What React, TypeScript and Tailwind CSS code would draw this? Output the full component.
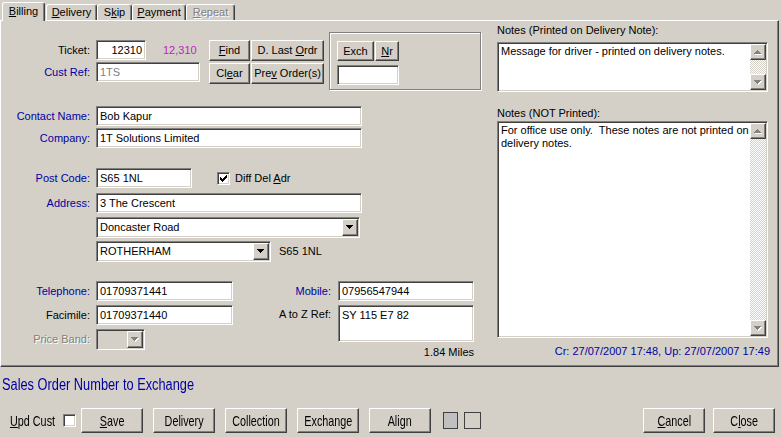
import type { ReactNode } from "react";

const sunken =
  "border border-t-[#808080] border-l-[#808080] border-b-white border-r-white shadow-[inset_1px_1px_0_#404040,inset_-1px_-1px_0_#d4d0c8]";
const raised =
  "border border-t-white border-l-white border-b-[#404040] border-r-[#404040] shadow-[inset_-1px_-1px_0_#808080]";
const blue = "text-[#0000a0]";
const disabledText = "text-[#808080] [text-shadow:1px_1px_0_#fff]";

function Label({ children, className = "" }: { children: ReactNode; className?: string }) {
  return (
    <div className={`w-[89px] mr-[6px] shrink-0 text-right whitespace-nowrap ${className}`}>{children}</div>
  );
}

function Field({ children, className = "" }: { children?: ReactNode; className?: string }) {
  return (
    <div
      className={`${sunken} bg-white h-[20px] shrink-0 flex items-center px-[3px] whitespace-nowrap overflow-hidden ${className}`}
    >
      {children}
    </div>
  );
}

function Btn({ children, className = "" }: { children?: ReactNode; className?: string }) {
  return (
    <div
      className={`${raised} bg-[#d4d0c8] shrink-0 flex items-center justify-center whitespace-nowrap ${className}`}
    >
      {children}
    </div>
  );
}

// windows style 7x4 pixel arrow
function Arrow({ up = false, gray = false }: { up?: boolean; gray?: boolean }) {
  const d = "M0 0H7V1H6V2H5V3H4V4H3V3H2V2H1V1H0Z";
  return (
    <svg
      width="8"
      height="5"
      viewBox="0 0 8 5"
      shapeRendering="crispEdges"
      className={up ? "rotate-180" : ""}
    >
      {gray && <path d={d} fill="#fff" transform={up ? "translate(0 0)" : "translate(1 1)"} />}
      <path d={d} fill={gray ? "#808080" : "#000"} transform={up ? "translate(1 1)" : ""} />
    </svg>
  );
}

function Combo({
  children,
  className = "",
  disabled = false,
}: {
  children?: ReactNode;
  className?: string;
  disabled?: boolean;
}) {
  return (
    <div
      className={`${sunken} ${disabled ? "bg-[#d4d0c8]" : "bg-white"} h-[21px] shrink-0 flex items-center pl-[3px] pr-[1px]`}
    >
      <div className={`flex-1 whitespace-nowrap overflow-hidden ${className}`}>{children}</div>
      <Btn className="w-[16px] h-[17px]">
        <Arrow gray={disabled} />
      </Btn>
    </div>
  );
}

function ScrollBar() {
  return (
    <div className="w-[16px] flex flex-col shrink-0">
      <Btn className="w-[16px] h-[16px]">
        <Arrow up gray />
      </Btn>
      <div className="flex-1 bg-[repeating-conic-gradient(#fff_0_25%,#d4d0c8_0_50%)] bg-[length:2px_2px]" />
      <Btn className="w-[16px] h-[16px]">
        <Arrow gray />
      </Btn>
    </div>
  );
}

function Memo({ children, className = "" }: { children?: ReactNode; className?: string }) {
  return (
    <div className={`${sunken} bg-white p-[1px] flex w-[271px] ${className}`}>
      <div className="flex-1 pl-[2px] pt-[1px] whitespace-pre">{children}</div>
      <ScrollBar />
    </div>
  );
}

function CheckBox({ checked = false }: { checked?: boolean }) {
  return (
    <div className={`${sunken} bg-white w-[13px] h-[13px] shrink-0 flex items-center justify-center`}>
      {checked && (
        <svg width="7" height="7" viewBox="0 0 7 7" shapeRendering="crispEdges">
          <path d="M0 2H1V3H2V4H3V3H4V2H5V1H6V0H7V3H6V4H5V5H4V6H3V7H2V6H1V5H0Z" fill="#000" />
        </svg>
      )}
    </div>
  );
}

function Tab({
  children,
  active = false,
  className = "",
}: {
  children: ReactNode;
  active?: boolean;
  className?: string;
}) {
  return (
    <div
      className={`${
        active ? "h-[19px] -mb-[1px] relative z-10 pb-[2px]" : "h-[16px]"
      } bg-[#d4d0c8] border-t border-l border-r border-t-white border-l-white border-r-[#404040] shadow-[inset_-1px_0_0_#808080] rounded-t-[3px] flex items-center justify-center shrink-0 ${className}`}
    >
      {children}
    </div>
  );
}

// condensed text for the bottom bar (no narrow face installed)
function Narrow({ children, className = "" }: { children: ReactNode; className?: string }) {
  return <span className={`inline-block whitespace-nowrap scale-x-[0.72] ${className}`}>{children}</span>;
}

function BottomBtn({ children }: { children: ReactNode }) {
  return (
    <Btn className="w-[62px] h-[25px]">
      <Narrow>{children}</Narrow>
    </Btn>
  );
}

export default function App() {
  return (
    <div className="w-[781px] h-[437px] bg-[#d4d0c8] overflow-hidden text-[11px] leading-[13px] text-black font-['Liberation_Sans',Arial,sans-serif] select-none">
      {/* tabs */}
      <div className="flex items-end h-[20px] pl-[2px]">
        <Tab active className="w-[43px]">
          <span>
            <u>B</u>illing
          </span>
        </Tab>
        <Tab className="w-[51px] ml-[1px]">
          <span>
            <u>D</u>elivery
          </span>
        </Tab>
        <Tab className="w-[35px]">
          <span>
            S<u>k</u>ip
          </span>
        </Tab>
        <Tab className="w-[54px]">
          <span>
            <u>P</u>ayment
          </span>
        </Tab>
        <Tab className="w-[49px]">
          <span className={disabledText}>
            <u>R</u>epeat
          </span>
        </Tab>
      </div>

      {/* tab page */}
      <div className="w-[779px] h-[347px] border border-t-white border-l-white border-b-[#404040] border-r-[#404040] shadow-[inset_-1px_-1px_0_#808080] flex">
        {/* left column */}
        <div className="w-[480px] shrink-0 pt-[11px]">
          <div className="flex items-start h-[58px]">
            <div className="w-[208px] shrink-0 pt-[8px]">
              <div className="flex items-center">
                <Label>Ticket:</Label>
                <Field className="w-[50px] justify-end">12310</Field>
                <span className="ml-[17px] text-[#c020c0]">12,310</span>
              </div>
              <div className="flex items-center mt-[2px]">
                <Label className={blue}>Cust Ref:</Label>
                <Field className="w-[104px] text-[#808080]">1TS</Field>
              </div>
            </div>
            <div className="w-[116px] shrink-0 pt-[8px]">
              <div className="flex">
                <Btn className="w-[41px] h-[21px]">
                  <span>
                    <u>F</u>ind
                  </span>
                </Btn>
                <Btn className="w-[73px] h-[21px] ml-[1px]">
                  <span>
                    D. Last <u>O</u>rdr
                  </span>
                </Btn>
              </div>
              <div className="flex mt-[2px]">
                <Btn className="w-[41px] h-[21px]">
                  <span>
                    Cl<u>e</u>ar
                  </span>
                </Btn>
                <Btn className="w-[73px] h-[21px] ml-[1px]">
                  <span>
                    Pre<u>v</u> Order(s)
                  </span>
                </Btn>
              </div>
            </div>
            <div className="ml-[4px] w-[152px] h-[58px] border border-[#808080] shadow-[1px_1px_0_#fff,inset_1px_1px_0_#fff] pl-[7px] pt-[8px]">
              <div className="flex">
                <Btn className="w-[37px] h-[20px]">Exch</Btn>
                <Btn className="w-[24px] h-[20px] ml-[1px]">
                  <u>N</u>r
                </Btn>
              </div>
              <Field className="w-[62px] h-[19px] mt-[4px]" />
            </div>
          </div>

          <div className="flex items-center mt-[16px]">
            <Label className={blue}>Contact Name:</Label>
            <Field className="w-[266px]">Bob Kapur</Field>
          </div>
          <div className="flex items-center mt-[2px]">
            <Label className={blue}>Company:</Label>
            <Field className="w-[266px]">1T Solutions Limited</Field>
          </div>

          <div className="flex items-center mt-[20px]">
            <Label className={blue}>Post Code:</Label>
            <Field className="w-[96px]">S65 1NL</Field>
            <div className="ml-[25px]">
              <CheckBox checked />
            </div>
            <span className="ml-[5px]">
              Diff Del <u>A</u>dr
            </span>
          </div>
          <div className="flex items-center mt-[5px]">
            <Label className={blue}>Address:</Label>
            <Field className="w-[266px]">3 The Crescent</Field>
          </div>
          <div className="flex items-center mt-[4px] pl-[95px]">
            <div className="w-[264px]">
              <Combo>Doncaster Road</Combo>
            </div>
          </div>
          <div className="flex items-center mt-[3px] pl-[95px]">
            <div className="w-[175px]">
              <Combo>ROTHERHAM</Combo>
            </div>
            <span className="ml-[8px]">S65 1NL</span>
          </div>

          <div className="flex mt-[19px]">
            <div className="w-[249px] shrink-0">
              <div className="flex items-center">
                <Label className={blue}>Telephone:</Label>
                <Field className="w-[137px]">01709371441</Field>
              </div>
              <div className="flex items-center mt-[4px]">
                <Label>Facimile:</Label>
                <Field className="w-[137px]">01709371440</Field>
              </div>
              <div className="flex items-center mt-[4px]">
                <Label className={disabledText}>Price Band:</Label>
                <div className="w-[49px]">
                  <Combo disabled />
                </div>
              </div>
            </div>
            <div className="w-[224px] shrink-0">
              <div className="flex items-center">
                <div className={`w-[81px] mr-[7px] text-right ${blue}`}>Mobile:</div>
                <Field className="w-[136px]">07956547944</Field>
              </div>
              <div className="flex items-start mt-[4px]">
                <div className="w-[81px] mr-[7px] text-right pt-[3px]">A to Z Ref:</div>
                <div className={`${sunken} bg-white w-[136px] h-[37px] px-[3px] pt-[3px]`}>SY 115 E7 82</div>
              </div>
              <div className="text-right mt-[4px]">1.84 Miles</div>
            </div>
          </div>
        </div>

        {/* right column */}
        <div className="ml-[16px] w-[273px] shrink-0 pt-[3px]">
          <div>Notes (Printed on Delivery Note):</div>
          <Memo className="h-[50px] mt-[5px]">Message for driver - printed on delivery notes.</Memo>
          <div className="mt-[15px]">Notes (NOT Printed):</div>
          <Memo className="h-[217px] mt-[1px]">
            {"For office use only.  These notes are not printed on\ndelivery notes."}
          </Memo>
          <div className={`text-right mt-[7px] ${blue}`}>Cr: 27/07/2007 17:48, Up: 27/07/2007 17:49</div>
        </div>
      </div>

      {/* bottom bar */}
      <div className="text-[15px] leading-[16px]">
        <div className={`pl-[2px] mt-[10px] ${blue}`}>
          <span className="inline-block whitespace-nowrap origin-left text-[16px] scale-x-[0.8]">
            Sales Order Number to Exchange
          </span>
        </div>
        <div className="flex items-center mt-[15px] pl-[10px] pr-[6px]">
          <span className="w-[53px] shrink-0">
            <Narrow className="origin-left">
              <u>U</u>pd Cust
            </Narrow>
          </span>
          <CheckBox />
          <div className="ml-[5px] flex gap-[10px]">
            <BottomBtn>
              <u>S</u>ave
            </BottomBtn>
            <BottomBtn>Delivery</BottomBtn>
            <BottomBtn>Collection</BottomBtn>
            <BottomBtn>Exchange</BottomBtn>
            <BottomBtn>Align</BottomBtn>
          </div>
          <div className="ml-[12px] w-[15px] h-[17px] bg-[#c0c0c0] border border-[#404040]" />
          <div className="ml-[6px] w-[17px] h-[17px] border border-[#404040]" />
          <div className="ml-auto flex gap-[8px]">
            <BottomBtn>
              <u>C</u>ancel
            </BottomBtn>
            <BottomBtn>
              C<u>l</u>ose
            </BottomBtn>
          </div>
        </div>
      </div>
    </div>
  );
}
